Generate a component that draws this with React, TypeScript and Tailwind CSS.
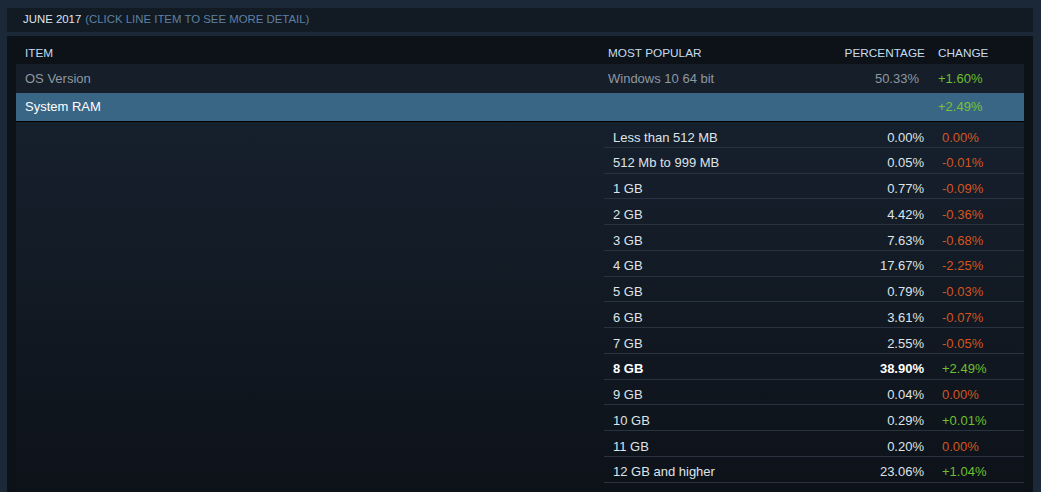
const ramRows = [
  { name: "Less than 512 MB", pct: "0.00%", change: "0.00%", up: false },
  { name: "512 Mb to 999 MB", pct: "0.05%", change: "-0.01%", up: false },
  { name: "1 GB", pct: "0.77%", change: "-0.09%", up: false },
  { name: "2 GB", pct: "4.42%", change: "-0.36%", up: false },
  { name: "3 GB", pct: "7.63%", change: "-0.68%", up: false },
  { name: "4 GB", pct: "17.67%", change: "-2.25%", up: false },
  { name: "5 GB", pct: "0.79%", change: "-0.03%", up: false },
  { name: "6 GB", pct: "3.61%", change: "-0.07%", up: false },
  { name: "7 GB", pct: "2.55%", change: "-0.05%", up: false },
  { name: "8 GB", pct: "38.90%", change: "+2.49%", up: true, bold: true },
  { name: "9 GB", pct: "0.04%", change: "0.00%", up: false },
  { name: "10 GB", pct: "0.29%", change: "+0.01%", up: true },
  { name: "11 GB", pct: "0.20%", change: "0.00%", up: false },
  { name: "12 GB and higher", pct: "23.06%", change: "+1.04%", up: true },
];

export default function App() {
  return (
    <div className='h-[492px] w-[1041px] overflow-hidden bg-[#1b2838] pl-[7px] pt-[8px] font-["Liberation_Sans",Arial,sans-serif]'>
      <div className="w-[1026px]">
        <div className="flex h-[24px] items-center bg-[#121a24] pl-[16px] text-[11.4px] uppercase">
          <span className="text-[#dfe6ec]">June 2017</span>
          <span className="ml-[4px] text-[#5e81a3]">(Click line item to see more detail)</span>
        </div>

        <div className="mt-[4px] h-[460px] bg-[#0d1219] px-[9px]">
          <div className="flex h-[28px] pt-[10px] text-[11.8px] leading-[14px] uppercase text-[#c5dcef]">
            <div className="w-[592px] pl-[9px]">Item</div>
            <div className="flex-1">Most Popular</div>
            <div className="text-right">Percentage</div>
            <div className="w-[99px] pl-[13px]">Change</div>
          </div>

          <div className="flex h-[29px] items-center bg-[#151e29] text-[13px] text-[#8f98a0]">
            <div className="w-[592px] pl-[9px]">OS Version</div>
            <div className="flex-1">Windows 10 64 bit</div>
            <div className="text-right">50.33%</div>
            <div className="w-[105px] pl-[19px] text-[#6fbf2e]">+1.60%</div>
          </div>

          <div className="flex h-[29px] items-center border-b border-black bg-[#3a6686] text-[13px] text-white">
            <div className="w-[592px] pl-[9px]">System RAM</div>
            <div className="flex-1" />
            <div className="w-[105px] pl-[19px] text-[#74c433]">+2.49%</div>
          </div>

          <div className="flex h-[380px] bg-gradient-to-b from-[#16202d] to-[#0d1219] pl-[588px]">
            <div className="w-[420px]">
              {ramRows.map((r) => (
                <div
                  key={r.name}
                  className={`flex h-[25.75px] items-center border-b border-[#29333f] pt-[6px] text-[13px] text-[#dfe4e8] ${r.bold ? "font-bold text-white" : ""}`}
                >
                  <div className="flex-1 pl-[9px]">{r.name}</div>
                  <div className="text-right">{r.pct}</div>
                  <div className={`w-[100px] pl-[18px] font-normal ${r.up ? "text-[#6fbf2e]" : "text-[#d4551f]"}`}>
                    {r.change}
                  </div>
                </div>
              ))}
            </div>
          </div>
        </div>
      </div>
    </div>
  );
}
